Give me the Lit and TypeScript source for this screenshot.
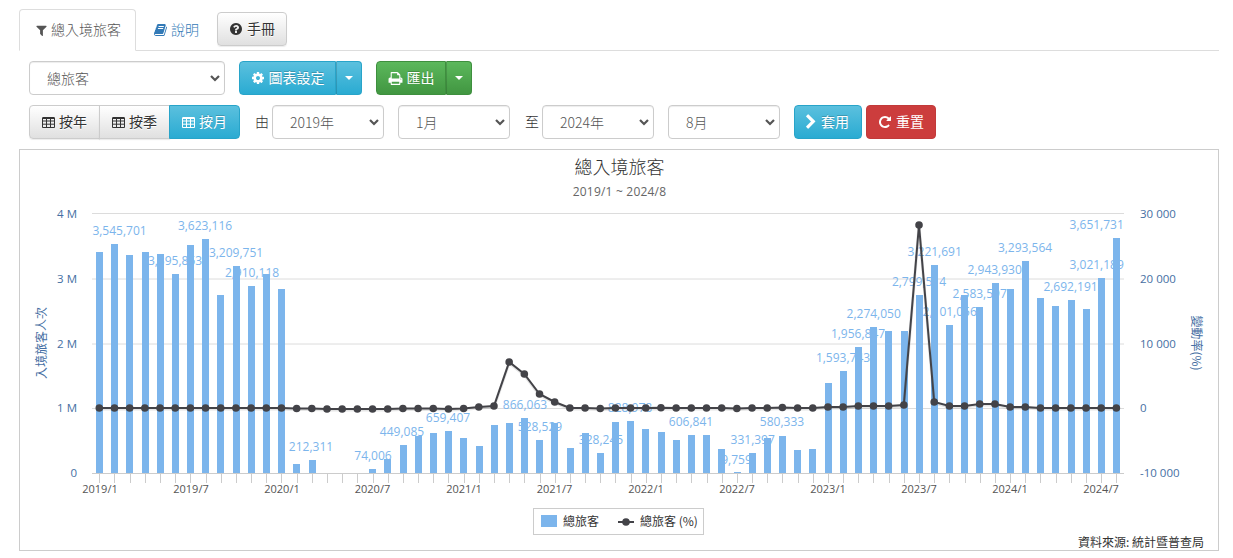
import { LitElement, html, css, svg } from "lit";
import { customElement } from "lit/decorators.js";

const PATHS = {
  filter: "M1595 295q17 41-14 70l-493 493v742q0 42-39 59-13 5-25 5-27 0-45-19l-256-256q-19-19-19-45v-486l-493-493q-31-29-14-70 17-39 59-39h1280q42 0 59 39z",
  book: "M1639 478q40 57 18 129l-275 906q-19 64-76.5 107.5t-122.5 43.5h-923q-77 0-148.5-53.5t-99.5-131.5q-24-67-2-127 0-4 3-27t4-37q1-8-3-21.5t-3-19.5q2-11 8-21t16.5-23.5 16.5-23.5q23-38 45-91.5t30-91.5q3-10 .5-30t-.5-28q3-11 17-28t17-23q21-36 42-92t25-90q1-9-2.5-32t.5-28q4-13 22-30.5t22-22.5q19-26 42.5-84.5t27.5-96.5q1-8-3-25.5t-2-26.5q2-8 9-18t18-23 17-21q8-12 16.5-30.5t15-35 16-36 19.5-32 26.5-23.5 36-11.5 47.5 5.5l-1 3q38-9 51-9h761q74 0 114 56t18 130l-274 906q-36 119-71.5 153.5t-128.5 34.5h-869q-27 0-38 15-11 16-1 43 24 70 144 70h923q29 0 56-15.5t35-41.5l300-987q7-22 5-57 38 15 59 43zm-1064 2q-4 13 2 22.5t20 9.5h608q13 0 25.5-9.5t16.5-22.5l21-64q4-13-2-22.5t-20-9.5h-608q-13 0-25.5 9.5t-16.5 22.5zm-83 256q-4 13 2 22.5t20 9.5h608q13 0 25.5-9.5t16.5-22.5l21-64q4-13-2-22.5t-20-9.5h-608q-13 0-25.5 9.5t-16.5 22.5z",
  question: "M1024 1376v-192q0-14-9-23t-23-9h-192q-14 0-23 9t-9 23v192q0 14 9 23t23 9h192q14 0 23-9t9-23zm256-672q0-88-55.5-163t-138.5-116-170-41q-243 0-371 213-15 24 8 42l132 100q7 6 19 6 16 0 25-12 53-68 86-92 34-24 86-24 48 0 85.5 26t37.5 59q0 38-20 61t-68 45q-63 28-115.5 86.5t-52.5 125.5v36q0 14 9 23t23 9h192q14 0 23-9t9-23q0-19 21.5-49.5t54.5-49.5q32-18 49-28.5t46-35 44.5-48 28-60.5 12.5-81zm384 192q0 209-103 385.5t-279.5 279.5-385.5 103-385.5-103-279.5-279.5-103-385.5 103-385.5 279.5-279.5 385.5-103 385.5 103 279.5 279.5 103 385.5z",
  cog: "M1152 896q0-106-75-181t-181-75-181 75-75 181 75 181 181 75 181-75 75-181zm512-109v222q0 12-8 23t-20 13l-185 28q-19 54-39 91 35 50 107 138 10 12 10 25t-9 23q-27 37-99 108t-94 71q-12 0-26-9l-138-108q-44 23-91 38-16 136-29 186-7 28-36 28h-222q-14 0-24.5-8.5t-11.5-21.5l-28-184q-49-16-90-37l-141 107q-10 9-25 9-14 0-25-11-126-114-165-168-7-10-7-23 0-12 8-23 15-21 51-66.5t54-70.5q-27-50-41-99l-183-27q-13-2-21-12.5t-8-23.5v-222q0-12 8-23t19-13l186-28q14-46 39-92-40-57-107-138-10-12-10-24 0-10 9-23 26-36 98.5-107.5t94.5-71.5q13 0 26 10l138 107q44-23 91-38 16-136 29-186 7-28 36-28h222q14 0 24.5 8.5t11.5 21.5l28 184q49 16 90 37l142-107q9-9 24-9 13 0 25 10 129 119 165 170 7 8 7 22 0 12-8 23-15 21-51 66.5t-54 70.5q26 50 41 98l183 28q13 2 21 12.5t8 23.5z",
  print: "M448 1536h896v-256h-896v256zm0-640h896v-384h-160q-40 0-68-28t-28-68v-160h-640v640zm1152 64q0-26-19-45t-45-19-45 19-19 45 19 45 45 19 45-19 19-45zm128 0v416q0 13-9.5 22.5t-22.5 9.5h-224v160q0 40-28 68t-68 28h-960q-40 0-68-28t-28-68v-160h-224q-13 0-22.5-9.5t-9.5-22.5v-416q0-79 56.5-135.5t135.5-56.5h64v-544q0-40 28-68t68-28h672q40 0 88 20t76 48l152 152q28 28 48 76t20 88v256h64q79 0 135.5 56.5t56.5 135.5z",
  chevron: "M1363 877l-742 742q-19 19-45 19t-45-19l-166-166q-19-19-19-45t19-45l531-531-531-531q-19-19-19-45t19-45l166-166q19-19 45-19t45 19l742 742q19 19 19 45t-19 45z",
  repeat: "M1664 256v448q0 26-19 45t-45 19h-448q-42 0-59-40-17-39 14-69l138-138q-148-137-349-137-104 0-198.5 40.5t-163.5 109.5-109.5 163.5-40.5 198.5 40.5 198.5 109.5 163.5 163.5 109.5 198.5 40.5q119 0 225-52t179-147q7-10 23-12 14 0 25 9l137 138q9 8 9.5 20.5t-7.5 22.5q-109 132-264 204.5t-327 72.5q-156 0-298-61t-245-164-164-245-61-298 61-298 164-245 245-164 298-61q147 0 284.5 55.5t244.5 156.5l130-129q29-31 70-14 39 17 39 59z",
};

const icon = (name: keyof typeof PATHS, size = 14) => html`<svg class="ico" width=${size} height=${size} viewBox="0 0 1792 1792" fill="currentColor"><path d=${PATHS[name]}></path></svg>`;
const gridIcon = () => html`<svg class="ico" width="13" height="11" viewBox="0 0 13 11" fill="none" stroke="currentColor" stroke-width="1"><path d="M.5 1h12v9.5H.5zM.5 4h12M.5 7.2h12M4.5 1v9.5M8.5 1v9.5"></path><path d="M.5 1h12" stroke-width="2"></path></svg>`;
const caret = () => html`<span class="caret"></span>`;
const chevronDown = () => html`<svg class="chev" width="10" height="7" viewBox="0 0 10 7" fill="none" stroke="#555" stroke-width="2.2"><path d="M1 1l4 4 4-4"></path></svg>`;

const TOPS: (number | null)[] = [
  252,244,255,252,254,274,245,239,295,266,286,274,289,464,460,null,null,null,469,459,445,436,433,431,
  438,446,425,423,418,440,423,448,433,453,422,421,429,432,440,435,435,449,472,453,438,436,450,449,
  383,371,347,327,331,331,295,265,325,295,307,283,289,261,298,306,300,309,278,238,
];
const LINE: number[] = [
  408,408,408,408,408,408,408,408,408,408,408,408,408,408.5,408.5,409,409,409,409,409,408.5,408.5,408.5,409,
  408.5,407,406,362,374,394,402,408,408,408.5,408,408,408,407.7,408,408,408,408,408.5,408,408,407.5,408,408,
  407,407,406,406,406,405,225,402,406,406,404,404,407,407,408,408,408,408,408,408,
];
const LABELS: [string, number, number][] = [
  ["3,545,701",119.5,235],["3,623,116",205,230],["3,395,853",175,265],["3,209,751",236,257],["2,910,118",252,277],
  ["212,311",311,451],["74,006",373,460],["449,085",402,436],["659,407",448,422],["866,063",525,408.7],
  ["528,529",540,430.7],["328,245",601,444],["828,978",630,412],["606,841",691,426],["331,397",752.7,444],
  ["9,759",736.5,464],["580,333",782,426],["1,593,743",843,362],["1,956,847",858,338],["2,274,050",873.7,318],
  ["2,799,514",919,286],["3,221,691",934.7,256],["2,101,056",949.7,316],["2,583,597",979.7,298],
  ["2,943,930",994.7,274],["3,293,564",1025,252],["2,692,191",1070.5,291],["3,021,189",1096.7,269],["3,651,731",1096.7,229],
];
const GRID = [213.5, 279, 344, 408.5];
const YL: [string, number][] = [["4 M",218],["3 M",282.5],["2 M",347.5],["1 M",412],["0",477]];
const YR: [string, number][] = [["30 000",218],["20 000",282.5],["10 000",347.5],["0",412],["-10 000",477]];
const XL: [string, number][] = [["2019/1",100],["2019/7",191],["2020/1",282],["2020/7",372.5],["2021/1",464],["2021/7",554.5],["2022/1",646],["2022/7",737],["2023/1",828],["2023/7",919],["2024/1",1010],["2024/7",1101]];
const cx = (i: number) => 99.3 + 15.18 * i;

@customElement("app-root")
export class AppRoot extends LitElement {
  static styles = css`
    :host { display: block; width: 1233px; height: 558px; overflow: hidden; background: #fff; font-family: "Noto Sans CJK TC", "Open Sans", sans-serif; font-size: 14px; font-weight: 300; color: #333; }
    * { box-sizing: border-box; }
    .page { width: 1200px; margin-left: 19px; padding-top: 9px; display: flex; flex-direction: column; }
    .tabs { display: flex; align-items: flex-start; height: 42px; border-bottom: 1px solid #ddd; }
    .tab { height: 42px; display: flex; align-items: center; gap: 3px; font-size: 14px; }
    .tab span, .btn span:not(.caret), .lbl { margin-top: -2px; }
    .tab.active { width: 117px; padding-left: 15px; background: #fff; border: 1px solid #ddd; border-bottom-color: #fff; border-radius: 4px 4px 0 0; color: #555; }
    .tab.link { width: 63px; padding-left: 18px; color: #337ab7; height: 41px; }
    .ico { flex: none; display: block; }
    .row { display: flex; align-items: center; margin-top: 10px; height: 34px; padding-left: 10px; }
    .btn { height: 34px; display: flex; align-items: center; justify-content: center; gap: 4px; border: 1px solid #ccc; border-radius: 4px; font-size: 14px; font-weight: 400; white-space: nowrap; }
    .default { background: linear-gradient(#fff, #e0e0e0); border-color: #ccc; color: #333; text-shadow: 0 1px 0 #fff; box-shadow: inset 0 1px 0 rgba(255,255,255,.15), 0 1px 1px rgba(0,0,0,.075); }
    .info { background: linear-gradient(#5bc0de, #2aabd2); border-color: #28a4c9; color: #fff; text-shadow: 0 -1px 0 rgba(0,0,0,.2); }
    .success { background: linear-gradient(#5cb85c, #419641); border-color: #3e8f3e; color: #fff; text-shadow: 0 -1px 0 rgba(0,0,0,.2); }
    .danger { background: #cc3d3d; border-color: #c23a3a; color: #fff; }
    .manual { width: 70px; margin-left: 18px; margin-top: 3px; }
    .split { display: flex; height: 34px; }
    .split .btn:first-child { border-radius: 4px 0 0 4px; }
    .split .btn:last-child { border-radius: 0 4px 4px 0; border-left: 1px solid rgba(0,0,0,.15); width: 26px; }
    .caret { width: 0; height: 0; border-left: 4px solid transparent; border-right: 4px solid transparent; border-top: 4px solid #fff; }
    .selwrap { position: relative; height: 34px; flex: none; }
    select { appearance: none; -webkit-appearance: none; width: 100%; height: 34px; padding: 0 24px 0 17px; background: #fff; border: 1px solid #ccc; border-radius: 4px; font: inherit; color: #555; box-shadow: inset 0 1px 1px rgba(0,0,0,.075); }
    .chev { position: absolute; right: 5px; top: 14px; pointer-events: none; }
    .w196 { width: 196px; }
    .w112 { width: 112px; }
    .ml14 { margin-left: 14px; }
    .ml4 { margin-left: 4px; }
    .w97 { width: 97px; }
    .w70 { width: 70px; }
    .w68 { width: 68px; }
    .apply { gap: 2px; padding-right: 4px; }
    .group { display: flex; width: 211px; }
    .group .btn { width: 71px; border-radius: 0; margin-left: -1px; }
    .group .btn:first-child { margin-left: 0; border-radius: 4px 0 0 4px; }
    .group .btn:last-child { border-radius: 0 4px 4px 0; }
    .lbl { margin-left: 15px; margin-right: 3px; color: #333; font-size: 14px; width: 14px; flex: none; }
    .card { margin-top: 10px; height: 402px; border: 1px solid #ccc; background: #fff; }
    .chart { display: block; }
    .data { font-family: "Open Sans", sans-serif; font-size: 12px; font-weight: 400; fill: #7cb5ec; text-anchor: middle; }
    .ax { font-family: "Open Sans", sans-serif; font-size: 11.5px; font-weight: 400; fill: #466fa3; }
    .xl { font-family: "Open Sans", sans-serif; font-size: 11px; font-weight: 400; fill: #555; text-anchor: middle; }
    .ttl { font-size: 18px; fill: #333; text-anchor: middle; }
    .sub { font-family: "Open Sans", sans-serif; font-size: 12px; font-weight: 400; letter-spacing: .2px; fill: #666; text-anchor: middle; }
    .axt { font-size: 12px; font-weight: 400; fill: #466fa3; text-anchor: middle; }
    .leg { font-size: 12px; font-weight: 400; fill: #333; }
    .src { font-size: 12px; font-weight: 400; fill: #333; text-anchor: end; }
  `;

  private sel(value: string, cls: string, extra = "") {
    return html`<div class="selwrap ${cls} ${extra}"><select><option>${value}</option></select>${chevronDown()}</div>`;
  }

  private chart() {
    const pts = LINE.map((y, i) => `${cx(i).toFixed(1)},${y}`).join(" ");
    return html`<svg class="chart" width="1198" height="400" viewBox="20 150 1198 400" xmlns="http://www.w3.org/2000/svg">
      ${svg`
      ${GRID.map((y) => svg`<line x1="92" x2="1124" y1=${y} y2=${y} stroke="#dcdcdc"></line>`)}
      <line x1="92" x2="1124" y1="473.5" y2="473.5" stroke="#ccc"></line>
      ${TOPS.map((_, i) => svg`<line x1=${Math.round(cx(i)) + .5} x2=${Math.round(cx(i)) + .5} y1="473" y2="483" stroke="#ccc"></line>`)}
      <text class="ttl" x="619.5" y="174">總入境旅客</text>
      <text class="sub" x="619.5" y="196">2019/1 ~ 2024/8</text>
      ${YL.map(([t, y]) => svg`<text class="ax" x="77" y=${y} text-anchor="end">${t}</text>`)}
      ${YR.map(([t, y]) => svg`<text class="ax" x="1140" y=${y}>${t}</text>`)}
      ${XL.map(([t, x]) => svg`<text class="xl" x=${x} y="493">${t}</text>`)}
      <text class="axt" transform="translate(46 343) rotate(-90)">入境旅客人次</text>
      <text class="axt" transform="translate(1192 343) rotate(90)">變動率(%)</text>
      ${LABELS.map(([t, x, y]) => svg`<text class="data" x=${x} y=${y}>${t}</text>`)}
      ${TOPS.map((top, i) => top === null ? null : svg`<rect x=${Math.round(96 + 15.18 * i)} y=${top} width="7" height=${473 - top} fill="#7cb5ec"></rect>`)}
      <polyline points=${pts} fill="none" stroke="#000" stroke-opacity=".1" stroke-width="3" transform="translate(0 1)"></polyline>
      <polyline points=${pts} fill="none" stroke="#434348" stroke-width="2"></polyline>
      ${LINE.map((y, i) => svg`<circle cx=${cx(i)} cy=${y} r="3.8" fill="#434348"></circle>`)}
      <rect x="533.5" y="508.5" width="170" height="26" fill="#fff" stroke="#ccc"></rect>
      <rect x="541" y="515" width="16" height="12" fill="#7cb5ec"></rect>
      <text class="leg" x="563" y="526">總旅客</text>
      <line x1="618" x2="634" y1="522" y2="522" stroke="#434348" stroke-width="2"></line>
      <circle cx="626" cy="522" r="3.8" fill="#434348"></circle>
      <text class="leg" x="640" y="526">總旅客 (%)</text>
      <text class="src" x="1204" y="547">資料來源: 統計暨普查局</text>
      `}
    </svg>`;
  }

  render() {
    return html`<div class="page">
      <div class="tabs">
        <div class="tab active">${icon("filter", 13)}<span>總入境旅客</span></div>
        <div class="tab link">${icon("book", 14)}<span>說明</span></div>
        <div class="btn default manual">${icon("question", 14)}<span>手冊</span></div>
      </div>
      <div class="row">
        ${this.sel("總旅客", "w196")}
        <div class="split ml14">
          <div class="btn info w97">${icon("cog", 14)}<span>圖表設定</span></div>
          <div class="btn info">${caret()}</div>
        </div>
        <div class="split ml14">
          <div class="btn success w70">${icon("print", 15)}<span>匯出</span></div>
          <div class="btn success">${caret()}</div>
        </div>
      </div>
      <div class="row">
        <div class="group">
          <div class="btn default">${gridIcon()}<span>按年</span></div>
          <div class="btn default">${gridIcon()}<span>按季</span></div>
          <div class="btn info">${gridIcon()}<span>按月</span></div>
        </div>
        <span class="lbl">由</span>
        ${this.sel("2019年", "w112")}
        ${this.sel("1月", "w112", "ml14")}
        <span class="lbl">至</span>
        ${this.sel("2024年", "w112")}
        ${this.sel("8月", "w112", "ml14")}
        <div class="btn info ml14 w68 apply">${icon("chevron", 16)}<span>套用</span></div>
        <div class="btn danger ml4 w70">${icon("repeat", 14)}<span>重置</span></div>
      </div>
      <div class="card">${this.chart()}</div>
    </div>`;
  }
}
